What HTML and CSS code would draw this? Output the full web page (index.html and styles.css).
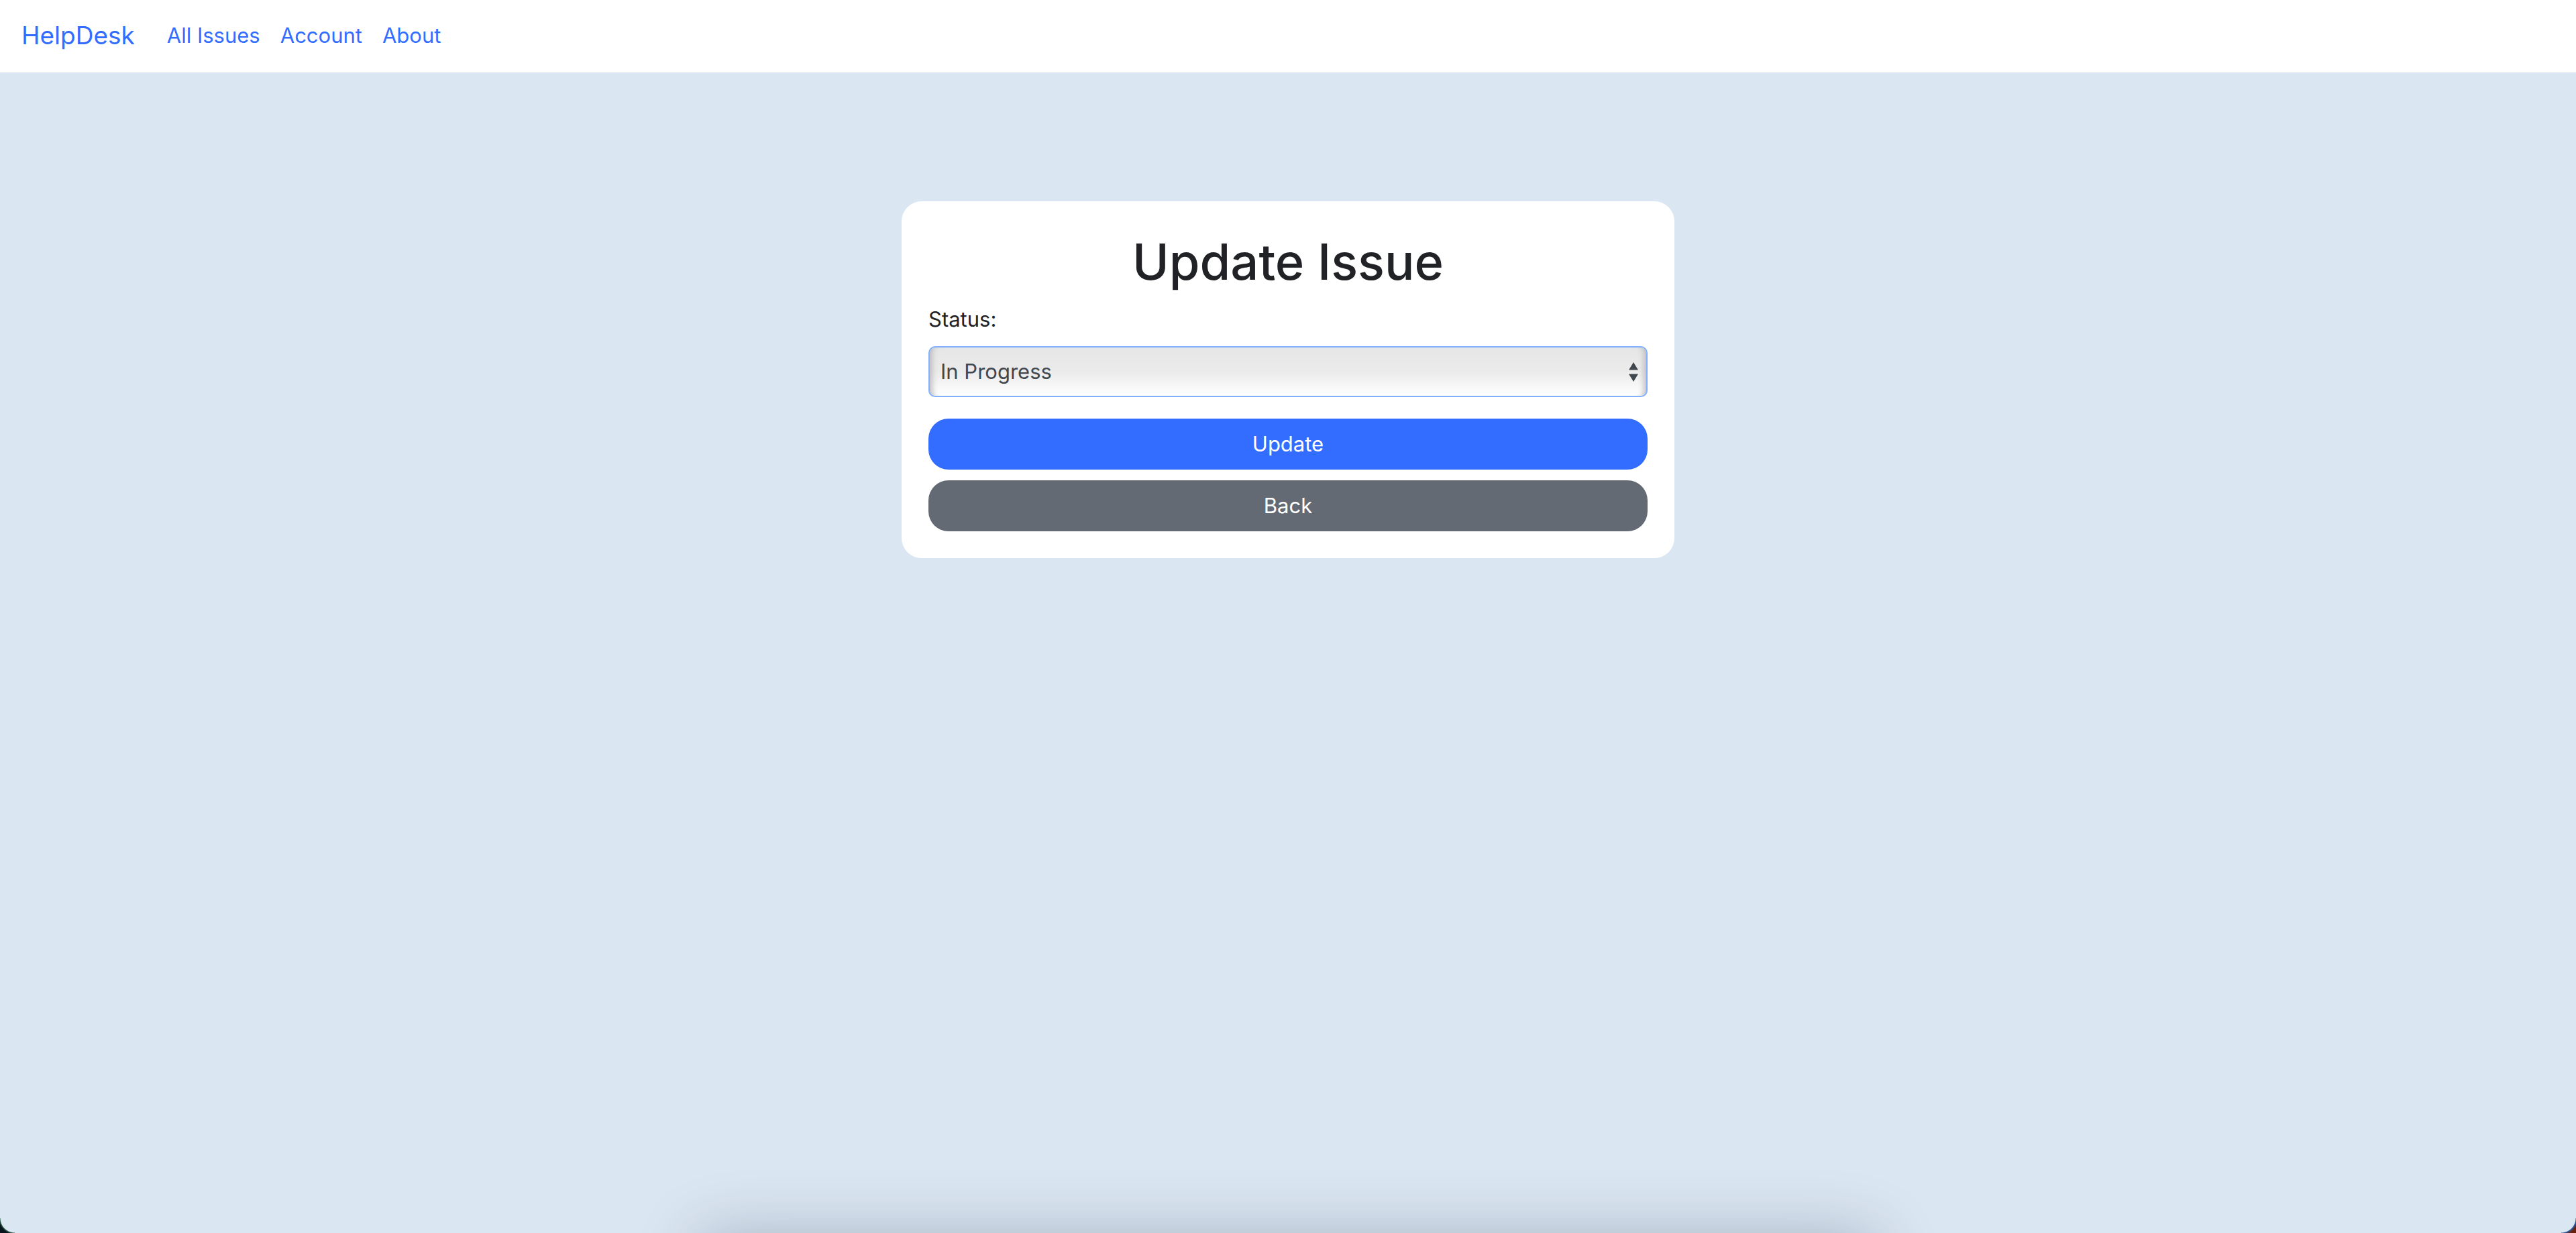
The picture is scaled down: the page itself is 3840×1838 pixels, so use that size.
FILE: index.html
```html
<!DOCTYPE html>
<html lang="en">
<head>
  <meta charset="utf-8">
  <meta name="viewport" content="width=device-width, initial-scale=1">
  <title>Update Issue - HelpDesk</title>
  <link rel="stylesheet" href="styles.css">
</head>
<body>
  <nav class="navbar">
    <a class="brand" href="#">HelpDesk</a>
    <ul class="nav-links">
      <li><a href="#">All Issues</a></li>
      <li><a href="#">Account</a></li>
      <li><a href="#">About</a></li>
    </ul>
  </nav>
  <main class="page">
    <form class="card">
      <h1 class="card-title">Update Issue</h1>
      <label class="field-label" for="status">Status:</label>
      <div class="select-wrap">
        <select class="select" id="status" name="status">
          <option>Open</option>
          <option selected>In Progress</option>
          <option>Closed</option>
        </select>
        <svg class="select-arrows" viewBox="0 0 14 29" aria-hidden="true">
          <path d="M7 0L14 11.500H0zM7 29L0 17.500H14z"/>
        </svg>
      </div>
      <div class="actions">
        <button class="button button-primary" type="submit">Update</button>
        <button class="button button-secondary" type="button">Back</button>
      </div>
    </form>
  </main>
  <div class="dock-shadow"></div>
  <div class="corner corner-left"></div>
  <div class="corner corner-right"></div>
</body>
</html>
```
FILE: styles.css
```css
* {
  box-sizing: border-box;
}

body {
  margin: 0;
  min-height: 100vh;
  background: #dae6f1;
  color: #212226;
  font-family: Inter, "Liberation Sans", sans-serif;
  font-size: 31px;
  line-height: 48px;
}

.navbar {
  display: flex;
  align-items: center;
  gap: 48px;
  padding: 23px 32px 25px;
  background: #fff;
}

.navbar a {
  color: #336dff;
  text-decoration: none;
}

.brand {
  font-size: 37px;
  line-height: 60px;
}

.nav-links {
  display: flex;
  gap: 30px;
  margin: 0;
  padding: 0;
  list-style: none;
}

.page {
  padding: 192px 0;
}

.card {
  width: 30%;
  min-width: 640px;
  margin: 0 auto;
  padding: 40px;
  border-radius: 30px;
  background: #fff;
}

.card-title {
  margin: 0 0 12px;
  font-size: 74px;
  font-weight: 500;
  line-height: 100px;
  text-align: center;
}

.field-label {
  display: block;
  margin-bottom: 16px;
}

.select-wrap {
  position: relative;
  margin-bottom: 32px;
}

.select {
  display: block;
  width: 100%;
  height: 76px;
  padding: 0 48px 0 16px;
  border: 2px solid #80b0ff;
  border-radius: 10px;
  outline: 0;
  appearance: none;
  background: linear-gradient(#e6e6e6, #ebebeb 50%, #f1f1f1 65%, #fff);
  box-shadow: inset 12px 0 10px -9px #b8b8b8, inset -12px 0 10px -9px #b8b8b8;
  color: #41474e;
  font: inherit;
}

.select-arrows {
  position: absolute;
  top: 24px;
  right: 14px;
  width: 14px;
  height: 29px;
  fill: #41474e;
  pointer-events: none;
}

.actions {
  display: flex;
  flex-direction: column;
  gap: 16px;
}

.button {
  height: 76px;
  padding: 0 24px;
  border: 0;
  border-radius: 30px;
  color: #fff;
  font: inherit;
  cursor: pointer;
}

.button-primary {
  background: #336dff;
}

.button-secondary {
  background: #636a73;
}

/* Screen edge: soft shadow and rounded window corners */
.dock-shadow {
  position: fixed;
  top: 100%;
  left: 27%;
  right: 27%;
  height: 160px;
  border-radius: 40px;
  box-shadow: 0 0 90px rgba(40, 55, 80, 0.27);
  pointer-events: none;
}

.corner {
  position: fixed;
  bottom: 0;
  width: 22px;
  height: 22px;
  pointer-events: none;
}

.corner-left {
  left: 0;
  background: radial-gradient(circle at 100% 0, transparent 21px, #2c5a48 22px, #07151c 24px);
}

.corner-right {
  right: 0;
  background: radial-gradient(circle at 0 0, transparent 21px, #2a5ba5 22px, #6a200f 25px);
}
```
